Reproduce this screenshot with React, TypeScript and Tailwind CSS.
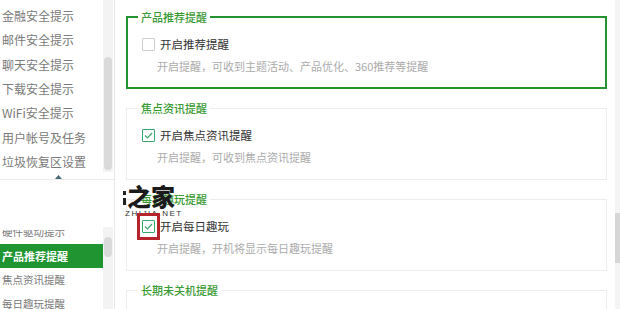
import React from "react";

const upperItems = [
  "金融安全提示",
  "邮件安全提示",
  "聊天安全提示",
  "下载安全提示",
  "WiFi安全提示",
  "用户帐号及任务",
  "垃圾恢复区设置",
];

const lowerItems = ["硬件驱动提示", "产品推荐提醒", "焦点资讯提醒", "每日趣玩提醒"];

const CheckBox = ({ checked }: { checked: boolean }) =>
  checked ? (
    <span className="flex h-[13px] w-[13px] shrink-0 items-center justify-center rounded-[1px] border border-[#35a86e] bg-white">
      <svg width="9" height="7" viewBox="0 0 9 7" fill="none">
        <path d="M1 3.5 L3.5 6 L8 1" stroke="#35a86e" strokeWidth="1.2" />
      </svg>
    </span>
  ) : (
    <span className="h-[13px] w-[13px] shrink-0 rounded-[1px] border border-[#cfcfcf] bg-white" />
  );

const Section = ({
  title,
  label,
  desc,
  checked,
  active,
}: {
  title: string;
  label: string;
  desc: string;
  checked: boolean;
  active?: boolean;
}) => (
  <fieldset
    className={
      active
        ? "border-2 border-[#23922f] pl-[14px] pr-4 pb-[13px]"
        : "border border-[#ededed] pl-[15px] pr-4 pb-[14px]"
    }
  >
    <legend className="ml-[-4px] px-[3px] text-[11px] font-medium leading-[14px] text-[#3b9a35]">
      {title}
    </legend>
    <div className="mt-[12px] flex h-4 items-center gap-[5px]">
      <CheckBox checked={checked} />
      <span className="text-[11.5px] leading-4 text-[#333]">{label}</span>
    </div>
    <div className="mt-[6px] h-4 pl-[15px] text-[11px] leading-4 text-[#ababab]">
      {desc}
    </div>
  </fieldset>
);

export default function App() {
  return (
    <div className="relative flex h-[309px] w-[620px] overflow-hidden bg-white font-['Noto_Sans_CJK_SC',sans-serif]">
      {/* left menu */}
      <aside className="flex w-[115px] shrink-0 flex-col border-r border-[#e8e8e8]">
        <div className="flex h-[186px] border-b border-[#ececec]">
          <div className="flex w-[103px] flex-col pl-[2px] pt-[4px]">
            {upperItems.map((t) => (
              <div key={t} className="flex h-[24.3px] items-center whitespace-nowrap text-[12px] text-[#7a7a7a]">
                {t}
              </div>
            ))}
            <svg className="ml-[53px] mt-[1px]" width="7" height="4" viewBox="0 0 7 4">
              <path d="M0 4 L3.5 0 L7 4 Z" fill="#4b6a78" />
            </svg>
          </div>
          <div className="mr-[1px] h-[172px] w-[10px] bg-[#f3f3f3] px-[1px] pt-[57px]">
            <div className="h-[113px] w-full rounded-[4px] bg-[#dadada]" />
          </div>
        </div>
        <div className="flex flex-1 flex-col">
          <div className="h-[47px]" />
          <div className="flex flex-1">
            <div className="w-[103px] overflow-hidden pt-[3px]">
              <div className="overflow-hidden">
                <div className="mt-[-10px]">
                  {lowerItems.map((t, i) =>
                    i === 1 ? (
                      <div
                        key={t}
                        className="flex h-[24px] items-center bg-[#1f9431] pl-[2px] text-[11px] font-bold text-white"
                      >
                        {t}
                      </div>
                    ) : (
                      <div key={t} className="flex h-[24px] items-center pl-[2px] text-[10.5px] text-[#7a7a7a]">
                        {t}
                      </div>
                    )
                  )}
                </div>
              </div>
            </div>
            <div className="mr-[1px] w-[10px] bg-[#f3f3f3] px-[1px] pt-[10px]">
              <div className="h-[20px] w-full rounded-[4px] bg-[#dadada]" />
            </div>
          </div>
        </div>
      </aside>

      {/* settings panel */}
      <main className="flex flex-1">
        <div className="flex flex-1 flex-col gap-3 pl-[11px] pr-[8px] pt-[10px]">
          <Section
            active
            title="产品推荐提醒"
            label="开启推荐提醒"
            desc="开启提醒，可收到主题活动、产品优化、360推荐等提醒"
            checked={false}
          />
          <Section
            title="焦点资讯提醒"
            label="开启焦点资讯提醒"
            desc="开启提醒，可收到焦点资讯提醒"
            checked
          />
          <Section
            title="每日趣玩提醒"
            label="开启每日趣玩"
            desc="开启提醒，开机将显示每日趣玩提醒"
            checked
          />
          <Section
            title="长期未关机提醒"
            label="开启长期未关机提醒"
            desc="开启提醒，长期未关机时将提示"
            checked
          />
        </div>
        <div className="w-[5px] bg-[#f4f4f4] pt-[213px]">
          <div className="h-[50px] w-full bg-[#d6d6d6]" />
        </div>
      </main>

      {/* watermark + highlight */}
      <span className="absolute left-[123px] top-[191px] h-[4px] w-[3px] bg-[#222]" />
      <span className="absolute left-[123px] top-[198px] h-[7px] w-[3px] bg-[#222]" />
      <div className="absolute left-[127px] top-[182px] text-[24px] font-black leading-[28px] text-[#1b1b1b]">
        之家
      </div>
      <div className="absolute left-[125px] top-[209px] font-['Liberation_Sans',sans-serif] text-[8px] leading-[9px] tracking-[1.5px] text-[#333]">
        ZHIJIA.NET
      </div>
      <div className="absolute left-[137px] top-[213px] h-[27px] w-[23px] border-[3px] border-[#b5242b]" />
    </div>
  );
}
